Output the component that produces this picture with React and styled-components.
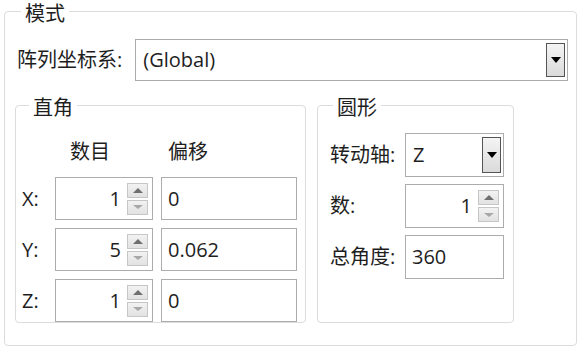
import React from "react";
import styled, { createGlobalStyle } from "styled-components";

const GlobalStyle = createGlobalStyle`
  html, body { margin: 0; padding: 0; background: #ffffff; }
  body {
    font-family: "Open Sans", "Noto Sans CJK SC", sans-serif;
    font-size: 20px;
    line-height: 24px;
    color: #1e1e1e;
  }
  * { box-sizing: border-box; }
`;

const Page = styled.div`
  width: 587px;
  height: 352px;
  padding: 0 10px 0 4px;
`;

const GroupBox = styled.fieldset`
  margin: 0;
  border: 1px solid #dcdcdc;
  border-radius: 4px;
  min-width: 0;
  padding: ${(p) => p.$pad};
  width: ${(p) => p.$width || "auto"};
  height: ${(p) => p.$height || "auto"};
`;

const Legend = styled.legend`
  padding: 6px 4px 0;
  margin-left: ${(p) => p.$indent}px;
  line-height: 16px;
  color: #1e1e1e;
`;

const ComboRow = styled.div`
  display: flex;
  align-items: center;
  gap: 13px;
  padding-left: 2px;
`;

const Label = styled.span`
  white-space: nowrap;
`;

const Combo = styled.div`
  position: relative;
  display: flex;
  align-items: center;
  height: ${(p) => p.$h || 42}px;
  width: ${(p) => (p.$w ? `${p.$w}px` : "auto")};
  flex: ${(p) => (p.$w ? "none" : "1")};
  border: 1px solid #acacac;
  padding-left: 7px;
  background: #fff;
`;

const DropButton = styled.div`
  position: absolute;
  right: 2px;
  top: 3px;
  bottom: 3px;
  width: 19px;
  border: 1px solid #555;
  background: linear-gradient(#f4f4f4, #dadada);
  display: flex;
  align-items: center;
  justify-content: center;
  &::after {
    content: "";
    border-left: 5px solid transparent;
    border-right: 5px solid transparent;
    border-top: 6px solid #000;
  }
`;

const GroupsRow = styled.div`
  display: flex;
  gap: 11px;
  margin-top: 13px;
`;

const RectGrid = styled.div`
  display: grid;
  grid-template-columns: 25px 98px 136px;
  grid-template-rows: 35px repeat(3, 43px);
  column-gap: 8px;
  row-gap: 8px;
  align-items: center;
`;

const Header = styled.span`
  padding-left: ${(p) => p.$indent}px;
`;

const CircGrid = styled.div`
  display: grid;
  grid-template-columns: 69px 99px;
  grid-template-rows: repeat(3, 44px);
  column-gap: 6px;
  row-gap: 7px;
  align-items: center;
`;

const TextBox = styled.div`
  height: 100%;
  border: 1px solid #acacac;
  display: flex;
  align-items: center;
  padding-left: 6px;
  background: #fff;
`;

const SpinBox = styled.div`
  height: 100%;
  border: 1px solid #acacac;
  display: flex;
  align-items: center;
  justify-content: flex-end;
  padding-right: 4px;
  gap: 6px;
  background: #fff;
`;

const SpinButtons = styled.div`
  display: flex;
  flex-direction: column;
  gap: 2px;
`;

const SpinButton = styled.div`
  width: 21px;
  height: 15px;
  border: 1px solid #c6c6c6;
  background: linear-gradient(#f2f2f2, #e2e2e2);
  display: flex;
  align-items: center;
  justify-content: center;
  &::after {
    content: "";
    border-left: 5px solid transparent;
    border-right: 5px solid transparent;
    ${(p) =>
      p.$dir === "up"
        ? "border-bottom: 5px solid #6f6f6f;"
        : "border-top: 4px solid #a8a8a8;"}
  }
`;

function Spin({ value }) {
  return (
    <SpinBox>
      <span>{value}</span>
      <SpinButtons>
        <SpinButton $dir="up" />
        <SpinButton $dir="down" />
      </SpinButtons>
    </SpinBox>
  );
}

export default function App() {
  const rows = [
    ["X:", "1", "0"],
    ["Y:", "5", "0.062"],
    ["Z:", "1", "0"],
  ];
  return (
    <>
      <GlobalStyle />
      <Page>
        <GroupBox $pad="17px 8px 0 10px" $height="346px">
          <Legend $indent={6}>模式</Legend>
          <ComboRow>
            <Label>阵列坐标系:</Label>
            <Combo>
              (Global)
              <DropButton />
            </Combo>
          </ComboRow>
          <GroupsRow>
            <GroupBox $pad="18px 7px 0 6px" $width="291px" $height="229px">
              <Legend $indent={7}>直角</Legend>
              <RectGrid>
                <span />
                <Header $indent={15}>数目</Header>
                <Header $indent={7}>偏移</Header>
                {rows.map(([l, n, o]) => (
                  <React.Fragment key={l}>
                    <Label>{l}</Label>
                    <Spin value={n} />
                    <TextBox>{o}</TextBox>
                  </React.Fragment>
                ))}
              </RectGrid>
            </GroupBox>
            <GroupBox $pad="17px 8px 0 12px" $width="197px" $height="229px">
              <Legend $indent={3}>圆形</Legend>
              <CircGrid>
                <Label>转动轴:</Label>
                <Combo $w={99} $h={44}>
                  Z
                  <DropButton />
                </Combo>
                <Label>数:</Label>
                <Spin value="1" />
                <Label>总角度:</Label>
                <TextBox>360</TextBox>
              </CircGrid>
            </GroupBox>
          </GroupsRow>
        </GroupBox>
      </Page>
    </>
  );
}
